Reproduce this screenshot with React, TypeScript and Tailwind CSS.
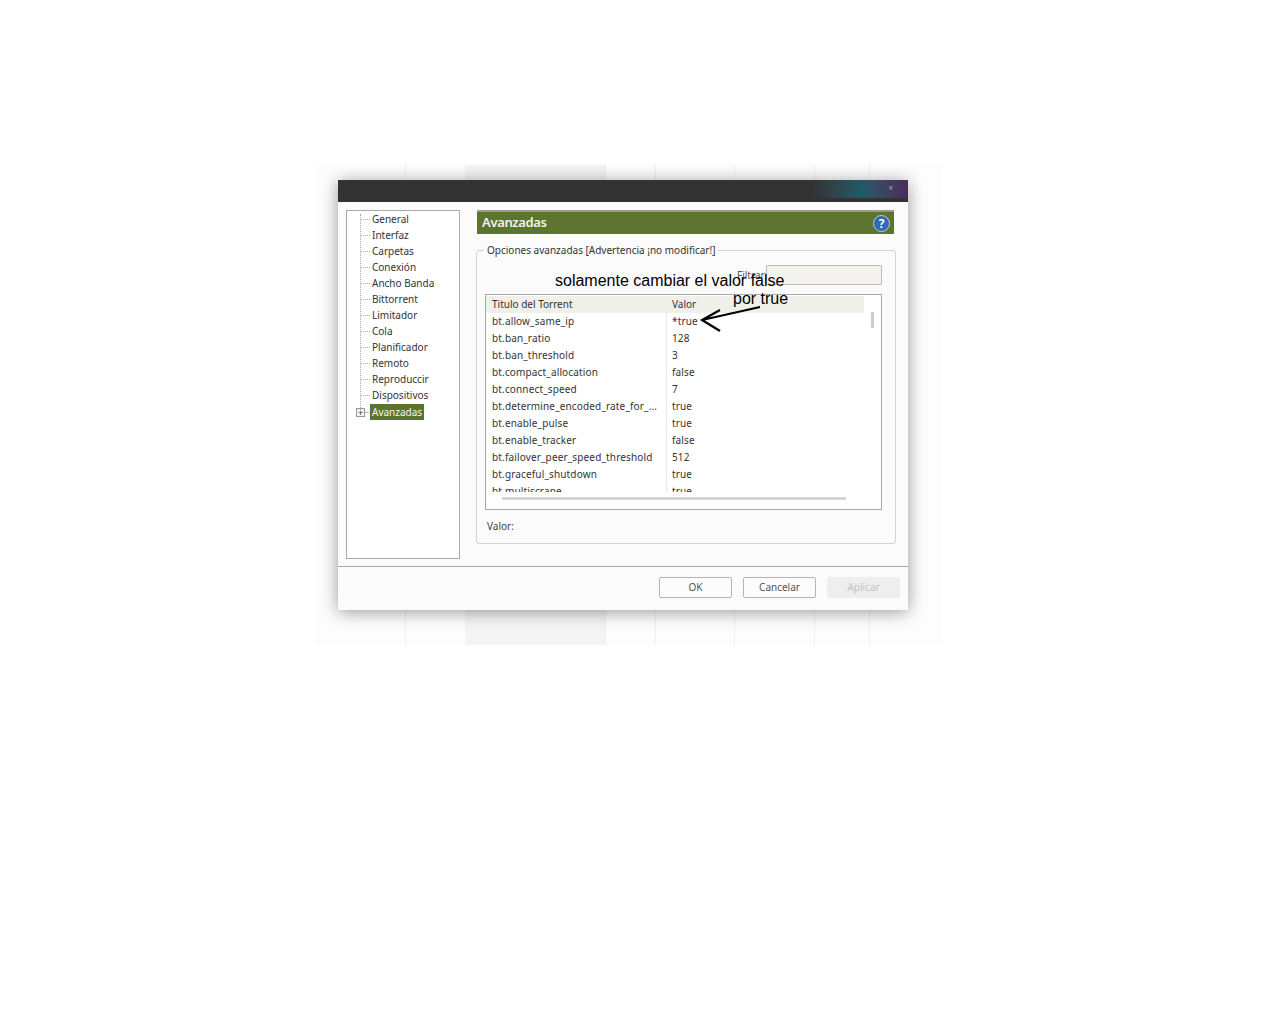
const TREE = ['General', 'Interfaz', 'Carpetas', 'Conexión', 'Ancho Banda', 'Bittorrent', 'Limitador', 'Cola', 'Planificador', 'Remoto', 'Reproduccir', 'Dispositivos'];

const ROWS = [
  ['bt.allow_same_ip', '*true'],
  ['bt.ban_ratio', '128'],
  ['bt.ban_threshold', '3'],
  ['bt.compact_allocation', 'false'],
  ['bt.connect_speed', '7'],
  ['bt.determine_encoded_rate_for_...', 'true'],
  ['bt.enable_pulse', 'true'],
  ['bt.enable_tracker', 'false'],
  ['bt.failover_peer_speed_threshold', '512'],
  ['bt.graceful_shutdown', 'true'],
  ['bt.multiscrape', 'true'],
];

const BACK_LINES = [405, 605, 655, 734, 814, 869];

function TreeRow({ label }: { label: string }) {
  return (
    <div className="flex h-4 items-center">
      <div className="ml-[14px] w-[9px] border-t border-dotted border-[#aaa]" />
      <span className="px-[2px] text-[#333]">{label}</span>
    </div>
  );
}

function Button({ label, disabled }: { label: string; disabled?: boolean }) {
  if (disabled) {
    return <div className="flex h-[21px] w-[73px] items-center justify-center rounded-[2px] bg-[#eeeeee] text-[#c2c2c2]">{label}</div>;
  }
  return <div className="flex h-[21px] w-[73px] items-center justify-center rounded-[2px] border border-[#b5b5b5] bg-[#fcfcfc] text-[#555]">{label}</div>;
}

export default function App() {
  return (
    <div className="h-[1024px] w-full overflow-hidden bg-white pl-[316px] pt-[165px] text-[10px]" style={{ fontFamily: '"Noto Sans", sans-serif' }}>
      <div className="relative h-[480px] w-[627px] bg-[#fdfdfd] pl-[22px] pt-[15px]">
        {/* window behind the dialog */}
        <div className="absolute left-[149px] top-0 h-[480px] w-[140px] bg-[#f4f4f4]" />
        {BACK_LINES.map((x) => (
          <div key={x} className="absolute top-0 h-[480px] w-px bg-[#efefef]" style={{ left: x - 316 }} />
        ))}

        <div className="relative flex h-[430px] w-[570px] flex-col bg-[#fbfbfb] shadow-[0_2px_16px_rgba(0,0,0,0.4)]">
          <div className="relative h-[22px] shrink-0 bg-[#333333]">
            <div className="absolute right-0 top-0 h-[18px] w-[95px] bg-gradient-to-r from-[#333333] via-[#1d5a66] to-[#4a2a5c]" />
            <span className="absolute right-[15px] top-[2px] text-[8px] text-[#aaa]">×</span>
          </div>

          <div className="flex h-[364px] shrink-0 pl-2 pt-2">
            <div className="relative h-[349px] w-[114px] border border-[#aaaaaa] bg-white">
              <div className="absolute left-[13px] top-[3px] h-[198px] border-l border-dotted border-[#aaa]" />
              {TREE.map((t) => (
                <TreeRow key={t} label={t} />
              ))}
              <div className="mt-px flex h-4 items-center">
                <div className="ml-[9px] flex h-[9px] w-[9px] items-center justify-center border border-[#999] bg-[#f2f2f2] text-[9px] leading-none text-[#333]">+</div>
                <div className="w-[5px] border-t border-dotted border-[#aaa]" />
                <span className="flex h-4 w-[54px] items-center bg-[#5b7530] px-[2px] text-[#f4f4f4]">Avanzadas</span>
              </div>
            </div>

            <div className="ml-4 w-[420px]">
              <div className="ml-px flex h-6 w-[417px] items-center justify-between border-t-2 border-[#999] bg-[#5b7530] pl-[5px] pr-[4px]">
                <span className="text-[13px] font-semibold tracking-[-0.35px] text-[#f2f2f2]">Avanzadas</span>
                <svg width="17" height="17" viewBox="0 0 17 17">
                  <circle cx="8.5" cy="8.5" r="8" fill="#3567b5" stroke="#b9cbe6" />
                  <text x="8.5" y="13" textAnchor="middle" fontSize="12" fontWeight="700" fill="#fff">?</text>
                </svg>
              </div>

              <div className="relative mt-4 h-[294px] rounded-[3px] border border-[#d4d4d4] px-2 pt-[14px]">
                <span className="absolute left-[7px] top-[-7px] bg-[#fbfbfb] px-[3px] leading-[13px] text-[#333]">Opciones avanzadas [Advertencia ¡no modificar!]</span>
                <div className="flex h-5 items-center justify-end pr-[5px]">
                  <span className="w-[29px] text-[#555]">Filtrar:</span>
                  <div className="h-5 w-[116px] rounded-[1px] border border-[#bdbdbd] bg-[#f4f3ee]" />
                </div>

                <div className="relative mt-[9px] h-[216px] w-[397px] border border-[#a8a8a8] bg-white pt-[1px]">
                  <div className="flex h-[17px] w-[378px] items-center bg-[#f0f0ea] text-[#333]">
                    <span className="w-[181px] pl-[6px]">Titulo del Torrent</span>
                    <span className="pl-[5px]">Valor</span>
                  </div>
                  <div className="h-[179px] overflow-hidden tracking-[0.15px]">
                    {ROWS.map(([k, v]) => (
                      <div key={k} className="flex h-[17px] items-center text-[#333]">
                        <span className="w-[180px] overflow-hidden whitespace-nowrap pl-[6px]">{k}</span>
                        <span className="h-[17px] border-l border-[#e8e8e8] pl-[5px] leading-[17px]">{v}</span>
                      </div>
                    ))}
                  </div>
                  <div className="ml-[16px] mt-[5px] h-[3px] w-[344px] bg-[#d4d4d4]" />
                  <div className="absolute left-[385px] top-[17px] h-4 w-[3px] bg-[#cccccc]" />
                </div>

                <div className="mt-[9px] pl-[2px] text-[#444]">Valor:</div>
              </div>
            </div>
          </div>

          <div className="flex flex-1 justify-end gap-[11px] border-t border-[#aaaaaa] pr-2 pt-[10px]">
            <Button label="OK" />
            <Button label="Cancelar" />
            <Button label="Aplicar" disabled />
          </div>
        </div>

        {/* annotation pasted over the dialog */}
        <div className="absolute left-[239px] top-[107px] text-[16px] leading-[18px] text-black" style={{ fontFamily: '"Liberation Sans", sans-serif' }}>
          solamente cambiar el valor false
          <div className="pl-[178px]">por true</div>
        </div>
        <svg className="absolute left-[380px] top-[140px]" width="70" height="35" viewBox="0 0 70 35" fill="none" stroke="#000" strokeWidth="2.2">
          <path d="M64 2 L6 15 M24 5 L6 15 L24 26" />
        </svg>
      </div>
    </div>
  );
}
